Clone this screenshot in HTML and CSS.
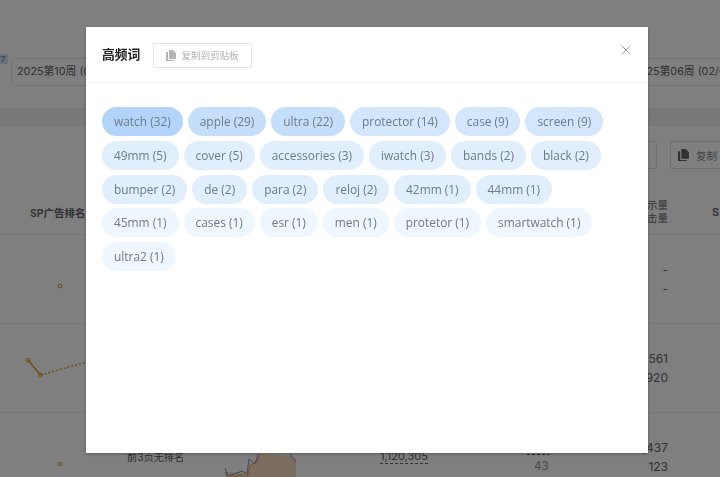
FILE: index.html
```html
<!DOCTYPE html>
<html lang="zh">
<head>
<meta charset="utf-8">
<title>高频词</title>
<link rel="stylesheet" href="styles.css">
</head>
<body>
<main class="page">
  <span class="badge">7</span>
  <section class="filters">
    <div class="date-box date-start">2025第10周 (02/03)</div>
    <div class="date-box date-end">2025第06周 (02/0</div>
  </section>
  <div class="band"></div>
  <section class="actions">
    <div class="action-blank"></div>
    <div class="action-copy">
      <svg class="copy-icon" viewBox="0 0 10 11"><path d="M3 0h4l3 3v6H3z"/><path d="M0 2h2v8h6v1H0z"/></svg>
      <span>复制</span>
    </div>
  </section>
  <section class="table">
    <div class="thead">
      <div class="th-rank">SP广告排名</div>
      <div class="th-metric"><div>展示量</div><div>点击量</div></div>
      <div class="th-last">S</div>
    </div>
    <div class="row">
      <svg class="spark" viewBox="0 0 90 89"><circle cx="60" cy="51" r="1.800"/></svg>
      <div class="metric"><div>-</div><div>-</div></div>
    </div>
    <div class="row">
      <svg class="spark" viewBox="0 0 90 89"><path class="solid" d="M28 36L40.500 51"/><path class="dots" d="M40.500 51L90 37"/><circle cx="28" cy="36" r="1.800"/><circle cx="40.500" cy="51" r="1.800"/></svg>
      <div class="metric"><div>12,561</div><div>5,920</div></div>
    </div>
    <div class="row row-last">
      <svg class="spark" viewBox="0 0 90 89"><circle cx="60" cy="51" r="1.800"/></svg>
      <div class="no-rank">前3页无排名</div>
      <svg class="area" viewBox="0 0 72 24"><path class="fill" d="M1 18L4 24L72 24L72 9L66 2L36 0L33 6L26 11L23 19L1 18Z"/><path class="line-a" d="M1 14L4 22L13 19L18 17L23 20L25 5L31 10L34 0M66 0L72 7"/><path class="line-b" d="M1 18L4 24L13 22L18 21L23 24L26 11L33 8L36 0M66 2L72 9"/></svg>
      <div class="volume">1,120,305</div>
      <div class="small-line"></div>
      <div class="small-num">43</div>
      <div class="metric"><div>8,437</div><div>123</div></div>
    </div>
  </section>
</main>

<div class="overlay"></div>
<div class="modal" role="dialog">
  <header class="modal-head">
    <h2 class="modal-title">高频词</h2>
    <button class="copy-btn" type="button">
      <svg class="copy-icon" viewBox="0 0 10 11"><path d="M3 0h4l3 3v6H3z"/><path d="M0 2h2v8h6v1H0z"/></svg>
      复制到剪贴板
    </button>
    <svg class="close" viewBox="0 0 10 10"><path d="M0.500 0.500L9.500 9.500M9.500 0.500L0.500 9.500"/></svg>
  </header>
  <div class="tags">
    <span class="tag t1">watch (32)</span>
    <span class="tag t2">apple (29)</span>
    <span class="tag t2">ultra (22)</span>
    <span class="tag t3">protector (14)</span>
    <span class="tag t3">case (9)</span>
    <span class="tag t3">screen (9)</span>
    <span class="tag t4">49mm (5)</span>
    <span class="tag t4">cover (5)</span>
    <span class="tag t4">accessories (3)</span>
    <span class="tag t4">iwatch (3)</span>
    <span class="tag t4">bands (2)</span>
    <span class="tag t4">black (2)</span>
    <span class="tag t4">bumper (2)</span>
    <span class="tag t4">de (2)</span>
    <span class="tag t4">para (2)</span>
    <span class="tag t4">reloj (2)</span>
    <span class="tag t4">42mm (1)</span>
    <span class="tag t4">44mm (1)</span>
    <span class="tag t5">45mm (1)</span>
    <span class="tag t5">cases (1)</span>
    <span class="tag t5">esr (1)</span>
    <span class="tag t5">men (1)</span>
    <span class="tag t5">protetor (1)</span>
    <span class="tag t5">smartwatch (1)</span>
    <span class="tag t5">ultra2 (1)</span>
  </div>
</div>
</body>
</html>
```

FILE: styles.css
```css
* { box-sizing: border-box; }
html, body { margin: 0; height: 100%; overflow: hidden; }
body { font-family: "Inter", "Noto Sans CJK SC", sans-serif; background: #fff; color: #606266; }

.page { position: relative; height: 477px; overflow: hidden; padding-top: 58px; }
.badge { position: absolute; left: -2px; top: 54px; width: 10px; height: 10px; background: #cfe2f7; color: #4a7fc0; font-size: 8px; line-height: 10px; text-align: center; }

.filters { display: flex; justify-content: space-between; height: 28px; padding: 0 0 0 11px; }
.date-box { height: 28px; width: 130px; border: 1px solid #e4e7ed; border-radius: 4px; font-size: 10.800px; line-height: 26px; padding-left: 5px; white-space: nowrap; overflow: hidden; }
.date-end { width: 93px; border-right: 0; border-radius: 4px 0 0 4px; }

.band { height: 18px; margin-top: 22px; background: #f0f0f0; }

.actions { display: flex; justify-content: flex-end; gap: 13px; height: 28px; margin-top: 15px; }
.action-blank { width: 60px; border: 1px solid #dcdfe6; border-radius: 3px; }
.action-copy { display: flex; align-items: center; gap: 7px; width: 50px; padding-left: 7px; border: 1px solid #dcdfe6; border-right: 0; border-radius: 3px 0 0 3px; font-size: 10.500px; color: #808388; white-space: nowrap; }
.action-copy .copy-icon { flex: none; width: 11px; height: 12px; fill: #606266; }

.table { margin-top: 21px; }
.thead { position: relative; display: flex; height: 45px; background: #fff; border-bottom: 1px solid #ebeef5; font-size: 10.500px; font-weight: 600; align-items: center; }
.th-rank { margin-left: 30px; width: 618px; }
.th-metric { width: 20px; display: flex; flex-direction: column; align-items: flex-end; line-height: 13px; font-weight: 400; white-space: nowrap; }
.th-last { margin-left: 44px; font-size: 11px; }
.row { position: relative; display: flex; justify-content: flex-end; height: 89px; border-bottom: 1px solid #ebeef5; }
.row-last { border-bottom: 0; }
.spark { position: absolute; left: 0; top: 0; width: 90px; height: 89px; }
.spark circle { fill: none; stroke: #e0a030; stroke-width: 1; }
.solid { fill: none; stroke: #e0a030; stroke-width: 1.500; }
.dots { fill: none; stroke: #e0a030; stroke-width: 1.500; stroke-dasharray: 2 2; }
.metric { width: 100px; margin-right: 52px; padding-top: 25px; text-align: right; font-size: 12px; line-height: 19px; }
.no-rank { position: absolute; left: 127px; top: 37px; font-size: 10.200px; line-height: 14px; white-space: nowrap; }
.area { position: absolute; left: 224px; top: 41px; width: 72px; height: 24px; overflow: visible; }
.fill { fill: #f7dcc0; }
.line-a { fill: none; stroke: #7b8fe0; stroke-width: 1; }
.line-b { fill: none; stroke: #f0a050; stroke-width: 1; }
.volume { position: absolute; left: 380px; top: 37px; font-size: 11px; border-bottom: 1px dashed #606266; line-height: 13px; }
.small-line { position: absolute; left: 527px; top: 41px; width: 23px; border-top: 1px dashed #606266; }
.small-num { position: absolute; left: 534px; top: 46px; font-size: 11.500px; line-height: 14px; color: #909399; }

.overlay { position: fixed; inset: 0; background: rgba(0, 0, 0, .5); }
.modal { position: fixed; left: 86px; top: 27px; width: 562px; height: 426px; background: #fff; box-shadow: 0 1px 3px rgba(0, 0, 0, .3); }
.modal-head { position: relative; display: flex; align-items: center; gap: 13px; height: 56px; padding: 1px 16px 0; border-bottom: 1px solid #f0f0f0; }
.modal-title { margin: 0 0 3px; font-size: 12.800px; font-weight: 700; color: #222; }
.copy-btn { display: flex; align-items: center; gap: 5px; width: 99px; height: 25px; padding: 0 0 0 12px; background: #fff; border: 1px solid #e4e7ed; border-radius: 2px; font-family: inherit; font-size: 9.600px; color: #b4b4b4; white-space: nowrap; }
.copy-btn .copy-icon { flex: none; width: 10px; height: 11px; fill: #b4b4b4; }
.close { position: absolute; left: 535px; top: 18px; width: 10px; height: 10px; }
.close path { fill: none; stroke: #9a9a9a; stroke-width: .9; }
.tags { display: flex; flex-wrap: wrap; gap: 4.750px 5px; padding: 24px 16px 0; }
.tag { height: 29px; padding: 0 12px; border-radius: 14.500px; font-family: "Open Sans", "Noto Sans CJK SC", sans-serif; font-size: 11.900px; line-height: 29px; color: #6d7a88; white-space: nowrap; }
.t1 { background: #b3d4fa; }
.t2 { background: #c5dffa; }
.t3 { background: #d4e6fb; }
.t4 { background: #e1eefc; }
.t5 { background: #eef6fe; }
```
